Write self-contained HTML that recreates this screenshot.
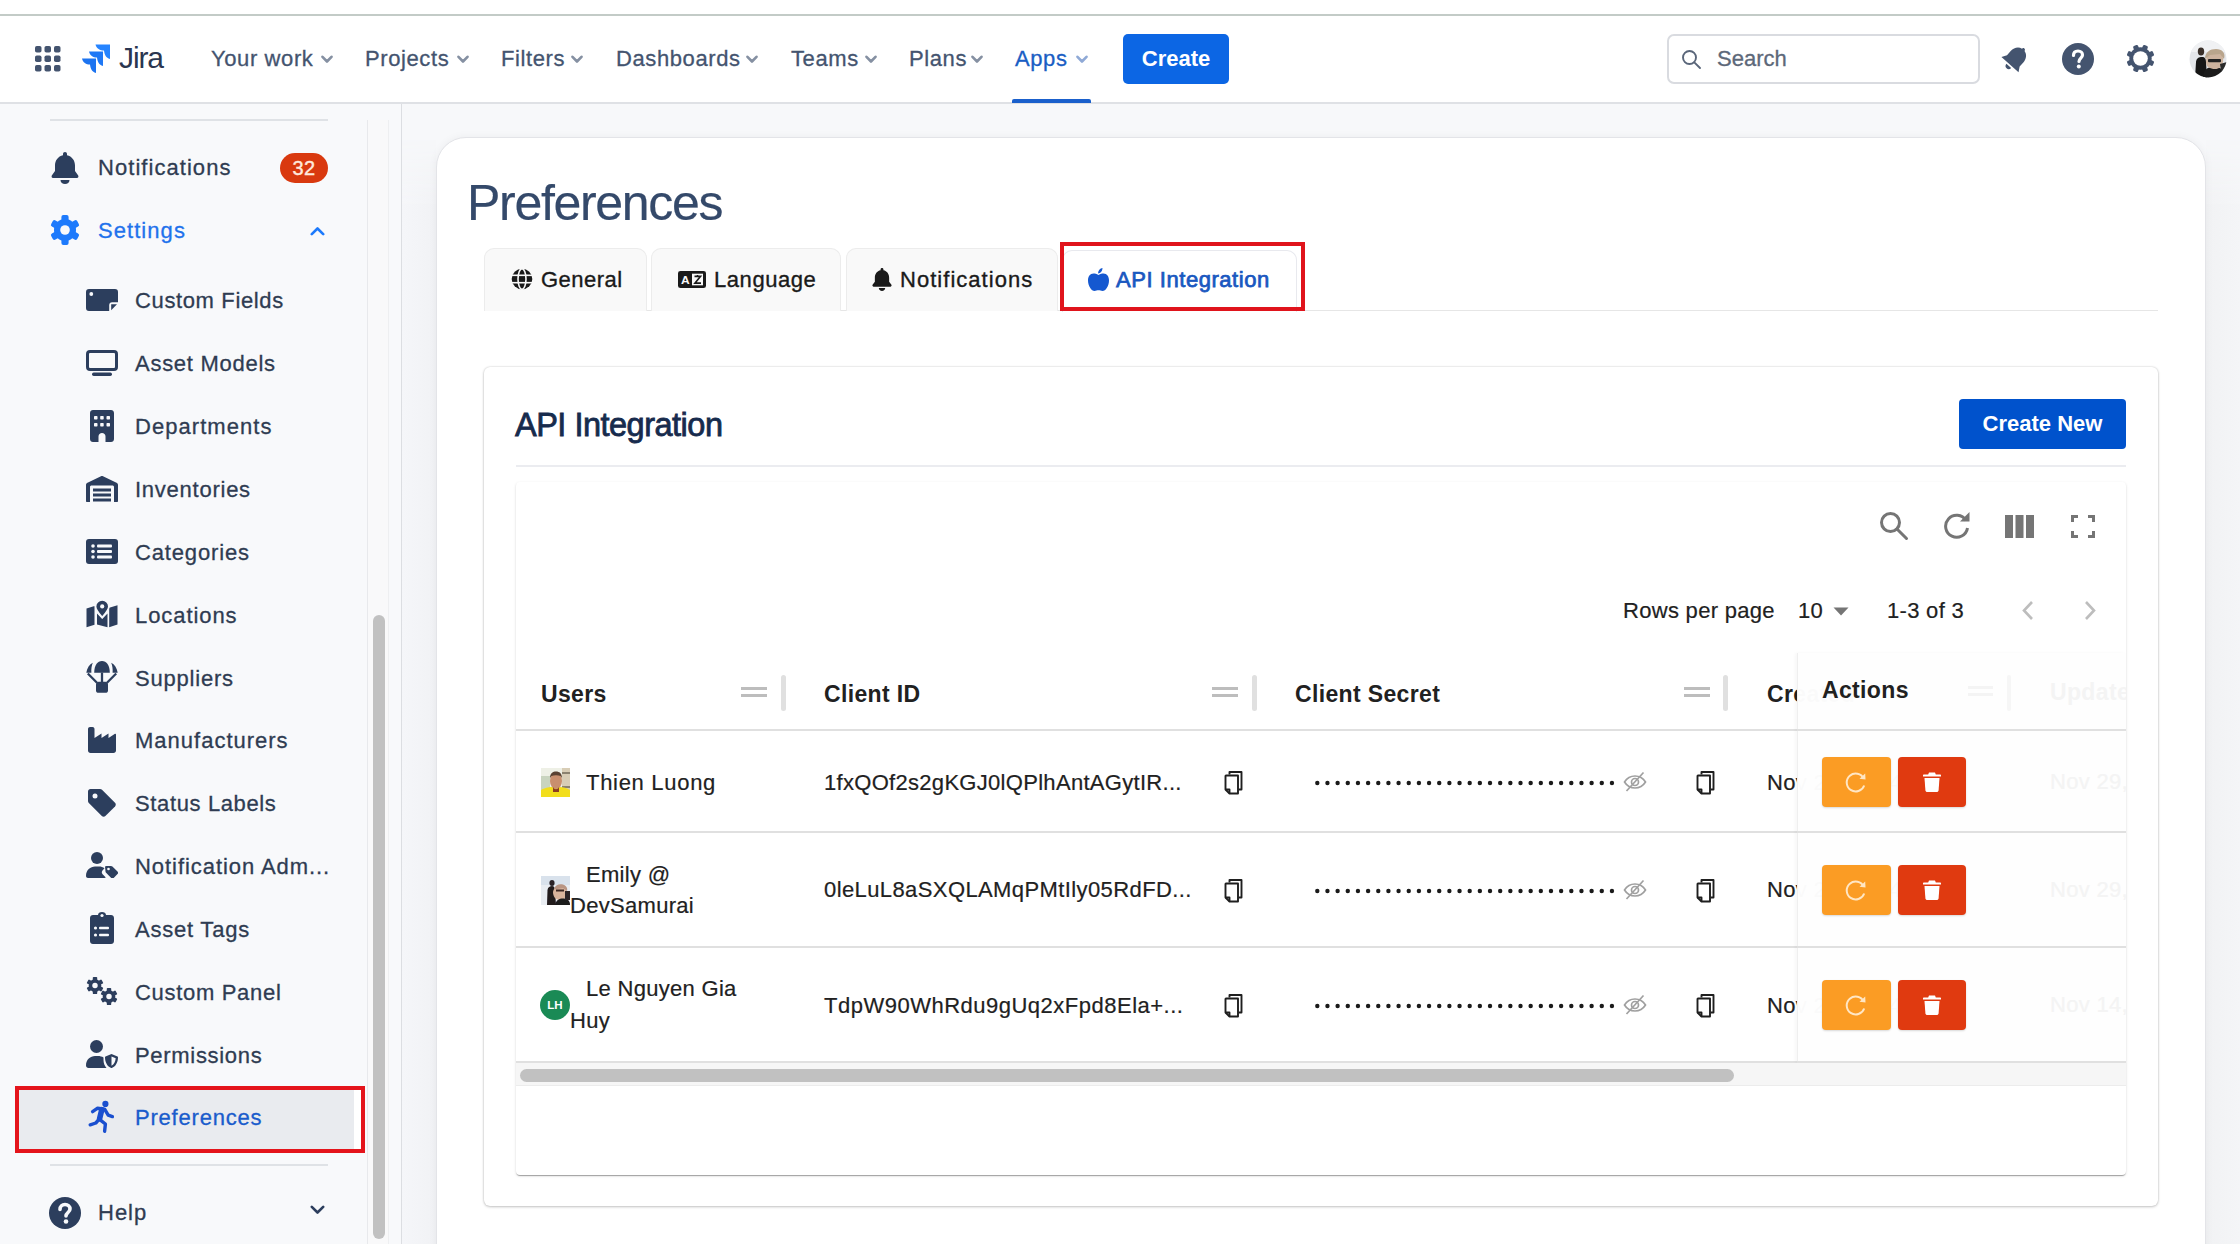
<!DOCTYPE html>
<html><head><meta charset="utf-8">
<style>
*{box-sizing:border-box;margin:0;padding:0}
html,body{width:2240px;height:1260px;overflow:hidden;background:#fff;font-family:"Liberation Sans",sans-serif}
.a{position:absolute}
.nw{white-space:nowrap}
#topline{left:0;top:14px;width:2240px;height:2px;background:#c3cbc7}
#nav{left:0;top:16px;width:2240px;height:88px;background:#fff;border-bottom:2px solid #dfe1e5}
.navt{font-size:22px;letter-spacing:0.6px;color:#44546f;top:45px;line-height:28px;-webkit-text-stroke:0.3px currentColor}
.chev{width:13px;height:9px}
#side{left:0;top:104px;width:401px;height:1140px;background:#f8f9fb}
.sbt{font-size:22px;letter-spacing:0.55px;color:#2f3c52;line-height:28px;-webkit-text-stroke:0.3px currentColor}
.sic{fill:#2c3e5d}
#main{left:401px;top:104px;width:1839px;height:1140px;background:#f7f8fa;border-left:1px solid #dcdee2}
#bigcard{left:436px;top:137px;width:1770px;height:1140px;background:#fff;border-radius:30px 30px 0 0;border:1px solid #e3e4e8;box-shadow:0 0 8px rgba(0,0,0,0.05)}
.tab{top:248px;height:63px;background:#f9f9f9;border:1px solid #ececec;border-bottom:none;border-radius:10px 10px 0 0}
.tabt{top:266px;-webkit-text-stroke:0.35px #1a1a1a;font-size:22px;color:#1a1a1a;line-height:28px;letter-spacing:0.2px}
.tt{font-size:22px;color:#212121;line-height:28px;letter-spacing:0.3px;-webkit-text-stroke:0.2px currentColor}
.th{top:680px;font-size:23px;font-weight:700;color:#212121;line-height:28px;letter-spacing:0.35px}
.td{font-size:22px;color:#212121;line-height:28px;letter-spacing:0.3px;-webkit-text-stroke:0.2px currentColor}
#bottom{left:0;top:1244px;width:2240px;height:16px;background:#fff}
</style></head><body>
<div id="topline" class="a"></div>

<div id="nav" class="a"></div>
<!-- grid icon -->
<svg class="a" style="left:35px;top:46px" width="26" height="26" viewBox="0 0 26 26" fill="#44546f">
<rect x="0" y="0" width="6.5" height="6.5" rx="1.8"/><rect x="9.5" y="0" width="6.5" height="6.5" rx="1.8"/><rect x="19" y="0" width="6.5" height="6.5" rx="1.8"/>
<rect x="0" y="9.5" width="6.5" height="6.5" rx="1.8"/><rect x="9.5" y="9.5" width="6.5" height="6.5" rx="1.8"/><rect x="19" y="9.5" width="6.5" height="6.5" rx="1.8"/>
<rect x="0" y="19" width="6.5" height="6.5" rx="1.8"/><rect x="9.5" y="19" width="6.5" height="6.5" rx="1.8"/><rect x="19" y="19" width="6.5" height="6.5" rx="1.8"/>
</svg>
<!-- jira logo -->
<svg class="a" style="left:82px;top:44px" width="29" height="30" viewBox="0 0 29 30">
<defs><linearGradient id="jg" x1="0" y1="0" x2="1" y2="1"><stop offset="0" stop-color="#2a7cf0"/><stop offset="1" stop-color="#1a6ee6"/></linearGradient></defs>
<path fill="#2684ff" d="M13.5,0.5 H28 V15 C24,14 22.5,10.5 22,6.5 C18,6.5 14.5,4.5 13.5,0.5Z"/>
<path fill="#1f78f5" d="M7,7.5 H21 V22 C17,21 15.5,17.5 15,13.5 C11,13.5 8,11.5 7,7.5Z"/>
<path fill="#1d74f0" d="M0,14.5 H14 V29 C10,28 8.5,24.5 8,20.5 C4,20.5 1,18.5 0,14.5Z"/>
</svg>
<div class="a nw" style="left:119px;top:41px;font-size:30px;color:#2a3650;letter-spacing:-1.1px;line-height:34px">Jira</div>
<div class="a nw navt" style="left:211px">Your work</div>
<div class="a nw navt" style="left:365px">Projects</div>
<div class="a nw navt" style="left:501px">Filters</div>
<div class="a nw navt" style="left:616px">Dashboards</div>
<div class="a nw navt" style="left:791px">Teams</div>
<div class="a nw navt" style="left:909px">Plans</div>
<div class="a nw navt" style="left:1015px;color:#1a5ec4">Apps</div>
<svg class="a" style="left:321px;top:55px" width="12" height="9" viewBox="0 0 12 9"><path d="M1.5,1.8 L6,6.5 L10.5,1.8" fill="none" stroke="#8590a2" stroke-width="2.6" stroke-linecap="round" stroke-linejoin="round"/></svg>
<svg class="a" style="left:457px;top:55px" width="12" height="9" viewBox="0 0 12 9"><path d="M1.5,1.8 L6,6.5 L10.5,1.8" fill="none" stroke="#8590a2" stroke-width="2.6" stroke-linecap="round" stroke-linejoin="round"/></svg>
<svg class="a" style="left:571px;top:55px" width="12" height="9" viewBox="0 0 12 9"><path d="M1.5,1.8 L6,6.5 L10.5,1.8" fill="none" stroke="#8590a2" stroke-width="2.6" stroke-linecap="round" stroke-linejoin="round"/></svg>
<svg class="a" style="left:746px;top:55px" width="12" height="9" viewBox="0 0 12 9"><path d="M1.5,1.8 L6,6.5 L10.5,1.8" fill="none" stroke="#8590a2" stroke-width="2.6" stroke-linecap="round" stroke-linejoin="round"/></svg>
<svg class="a" style="left:865px;top:55px" width="12" height="9" viewBox="0 0 12 9"><path d="M1.5,1.8 L6,6.5 L10.5,1.8" fill="none" stroke="#8590a2" stroke-width="2.6" stroke-linecap="round" stroke-linejoin="round"/></svg>
<svg class="a" style="left:971px;top:55px" width="12" height="9" viewBox="0 0 12 9"><path d="M1.5,1.8 L6,6.5 L10.5,1.8" fill="none" stroke="#8590a2" stroke-width="2.6" stroke-linecap="round" stroke-linejoin="round"/></svg>
<svg class="a" style="left:1076px;top:55px" width="12" height="9" viewBox="0 0 12 9"><path d="M1.5,1.8 L6,6.5 L10.5,1.8" fill="none" stroke="#8fa9d6" stroke-width="2.6" stroke-linecap="round" stroke-linejoin="round"/></svg>

<div class="a" style="left:1012px;top:99px;width:79px;height:4px;background:#1a60cc;border-radius:2px 2px 0 0"></div>
<div class="a nw" style="left:1123px;top:34px;width:106px;height:50px;background:#0c66e4;border-radius:5px;color:#fff;font-size:22px;font-weight:700;line-height:50px;text-align:center">Create</div>
<!-- search -->
<div class="a" style="left:1667px;top:34px;width:313px;height:50px;border:2.5px solid #d9dbe0;border-radius:7px;background:#fff"></div>
<svg class="a" style="left:1681px;top:49px" width="21" height="21" viewBox="0 0 21 21" fill="none" stroke="#5a667a" stroke-width="1.9"><circle cx="8.5" cy="8.5" r="6.5"/><line x1="13.3" y1="13.3" x2="19" y2="19" stroke-linecap="round"/></svg>
<div class="a nw" style="left:1717px;top:45px;font-size:22px;color:#5d6879;line-height:28px;-webkit-text-stroke:0.3px currentColor">Search</div>
<!-- bell tilted -->
<svg class="a" style="left:1998px;top:42px" width="34" height="34" viewBox="0 0 34 34" fill="#44546f">
<g transform="rotate(42 17 17)"><path d="M17,3 C18,3 18.7,3.7 18.7,4.6 C23,5.6 25.5,9.5 25.5,14 V19.5 L28.5,24.5 H5.5 L8.5,19.5 V14 C8.5,9.5 11,5.6 15.3,4.6 C15.3,3.7 16,3 17,3Z"/><path d="M13.8,26.3 H20.2 C20.2,28.3 18.8,29.6 17,29.6 C15.2,29.6 13.8,28.3 13.8,26.3Z"/></g>
</svg>
<!-- help -->
<svg class="a" style="left:2062px;top:43px" width="32" height="32" viewBox="0 0 32 32">
<circle cx="16" cy="16" r="16" fill="#44546f"/>
<path d="M11.5,12.5 C11.5,9.5 13.5,8 16,8 C18.8,8 20.5,9.8 20.5,12 C20.5,15 17,15.2 17,18.5" fill="none" stroke="#fff" stroke-width="3.2" stroke-linecap="round"/>
<circle cx="16.8" cy="23.5" r="2" fill="#fff"/>
</svg>
<!-- gear -->
<svg class="a" style="left:2126px;top:44px" width="29" height="29" viewBox="0 0 29 29"><g fill="#44546f" transform="translate(14.5 14.5)"><circle r="11.2"/><rect x="-2.6" y="-14" width="5.2" height="5" rx="1.3" transform="rotate(22.5)"/><rect x="-2.6" y="-14" width="5.2" height="5" rx="1.3" transform="rotate(67.5)"/><rect x="-2.6" y="-14" width="5.2" height="5" rx="1.3" transform="rotate(112.5)"/><rect x="-2.6" y="-14" width="5.2" height="5" rx="1.3" transform="rotate(157.5)"/><rect x="-2.6" y="-14" width="5.2" height="5" rx="1.3" transform="rotate(202.5)"/><rect x="-2.6" y="-14" width="5.2" height="5" rx="1.3" transform="rotate(247.5)"/><rect x="-2.6" y="-14" width="5.2" height="5" rx="1.3" transform="rotate(292.5)"/><rect x="-2.6" y="-14" width="5.2" height="5" rx="1.3" transform="rotate(337.5)"/></g><circle cx="14.5" cy="14.5" r="7.3" fill="#fff"/></svg>
<!-- avatar -->
<svg class="a" style="left:2189px;top:40px" width="38" height="38" viewBox="0 0 38 38">
<defs><clipPath id="avc"><circle cx="19" cy="19" r="18.5"/></clipPath></defs>
<g clip-path="url(#avc)">
<rect width="38" height="38" fill="#e4e6ea"/>
<rect x="0" y="0" width="38" height="12" fill="#f0f1f3"/>
<path d="M6,38 L7,22 C7.5,18 10,17 13,17 C16,17 17,19 17,22 L18,38Z" fill="#161616"/>
<ellipse cx="12" cy="11.5" rx="3.2" ry="4" fill="#3a302a"/>
<path d="M14,38 C14,30 18,27 25,27 C32,27 38,31 38,38Z" fill="#1b1b1b"/>
<path d="M17,22 C17,16 20,12 26,12 C32,12 35,16 34,22 C33,27 30,29 26,29 C21,29 17,27 17,22Z" fill="#cdb39e"/>
<path d="M16,19 C16,12 21,9 27,9 C33,9 37,13 35,19 L31,14 L21,15Z" fill="#b9a58c"/>
<rect x="19" y="19" width="13" height="3.2" rx="1" fill="#222"/>
<path d="M31,24 L38,22 V38 H33Z" fill="#2a2a2a"/>
</g>
</svg>

<div id="side" class="a"></div>
<div class="a" style="left:50px;top:119px;width:278px;height:2px;background:#dfe2e6"></div>
<div class="a" style="left:51px;top:152px"><svg width="28" height="32" viewBox="0 0 28 32" fill="#2c3e5d"><path d="M14,0 C15.2,0 16,0.8 16,2 V3.2 C21,4.2 24,8.5 24,13.5 V19 L27.2,23.5 C27.8,24.5 27.2,26 26,26 H2 C0.8,26 0.2,24.5 0.8,23.5 L4,19 V13.5 C4,8.5 7,4.2 12,3.2 V2 C12,0.8 12.8,0 14,0Z"/><path d="M9.5,28 H18.5 C18.5,30.5 16.5,32 14,32 C11.5,32 9.5,30.5 9.5,28Z"/></svg></div>
<div class="a nw sbt" style="left:98px;top:154px;letter-spacing:1.05px">Notifications</div>
<div class="a nw" style="left:280px;top:153px;width:48px;height:30px;border-radius:15px;background:#d9390f;color:#ffe9dc;font-size:20px;line-height:30px;text-align:center;-webkit-text-stroke:0.4px #ffe9dc;letter-spacing:0.5px">32</div>
<div class="a" style="left:50px;top:215px"><svg width="30" height="30" viewBox="0 0 30 30"><g fill="#1d7afc" transform="translate(15 15)"><circle r="11"/><rect x="-3.6" y="-15" width="7.2" height="7" rx="2" transform="rotate(0)"/><rect x="-3.6" y="-15" width="7.2" height="7" rx="2" transform="rotate(60)"/><rect x="-3.6" y="-15" width="7.2" height="7" rx="2" transform="rotate(120)"/><rect x="-3.6" y="-15" width="7.2" height="7" rx="2" transform="rotate(180)"/><rect x="-3.6" y="-15" width="7.2" height="7" rx="2" transform="rotate(240)"/><rect x="-3.6" y="-15" width="7.2" height="7" rx="2" transform="rotate(300)"/></g><circle cx="15" cy="15" r="4.8" fill="#f8f9fb"/></svg></div>
<div class="a nw sbt" style="left:98px;top:217px;color:#1f72ec;letter-spacing:1.06px">Settings</div>
<svg class="a" style="left:310px;top:226px" width="15" height="10" viewBox="0 0 15 10"><path d="M1.8,8.2 L7.5,2.5 L13.2,8.2" fill="none" stroke="#1d7afc" stroke-width="2.6" stroke-linecap="round" stroke-linejoin="round"/></svg>
<div class="a" style="left:86px;top:289px"><svg width="32" height="22" viewBox="0 0 32 22"><path fill="#2c3e5d" d="M3,0 H29 Q32,0 32,3 V13.2 H26.2 Q23.2,13.2 23.2,16.2 V22 H3 Q0,22 0,19 V3 Q0,0 3,0Z"/><circle cx="5.3" cy="5" r="1.9" fill="#f8f9fb"/><path fill="#2c3e5d" d="M25.2,15.3 H31 L25.2,21.3Z"/></svg></div>
<div class="a nw sbt" style="left:135px;top:287px;letter-spacing:0.63px">Custom Fields</div>
<div class="a" style="left:86px;top:350px"><svg width="32" height="26" viewBox="0 0 32 26" fill="none"><rect x="1.5" y="1.5" width="29" height="18" rx="2.5" stroke="#2c3e5d" stroke-width="3"/><rect x="6" y="22.5" width="20" height="3.5" rx="1.7" fill="#2c3e5d"/></svg></div>
<div class="a nw sbt" style="left:135px;top:350px;letter-spacing:0.73px">Asset Models</div>
<div class="a" style="left:90px;top:410px"><svg width="24" height="32" viewBox="0 0 24 32"><path fill="#2c3e5d" d="M3,0 H21 C22.7,0 24,1.3 24,3 V29 C24,30.7 22.7,32 21,32 H15.5 V26.5 C15.5,24.5 14,23 12,23 C10,23 8.5,24.5 8.5,26.5 V32 H3 C1.3,32 0,30.7 0,29 V3 C0,1.3 1.3,0 3,0Z"/><g fill="#f8f9fb"><rect x="4" y="6" width="3.5" height="3.5" rx=".7"/><rect x="10.2" y="6" width="3.5" height="3.5" rx=".7"/><rect x="16.5" y="6" width="3.5" height="3.5" rx=".7"/><rect x="4" y="13" width="3.5" height="3.5" rx=".7"/><rect x="10.2" y="13" width="3.5" height="3.5" rx=".7"/><rect x="16.5" y="13" width="3.5" height="3.5" rx=".7"/></g></svg></div>
<div class="a nw sbt" style="left:135px;top:413px;letter-spacing:1.05px">Departments</div>
<div class="a" style="left:86px;top:476px"><svg width="32" height="26" viewBox="0 0 32 26"><path fill="#2c3e5d" d="M0,9 C0,8 0.6,7.2 1.5,6.8 L15,0.3 C15.6,0 16.4,0 17,0.3 L30.5,6.8 C31.4,7.2 32,8 32,9 V25 C32,25.6 31.6,26 31,26 H28 V11 C28,10 27.2,9.5 26.5,9.5 H5.5 C4.8,9.5 4,10 4,11 V26 H1 C0.4,26 0,25.6 0,25Z"/><rect x="7" y="12.5" width="18" height="3" fill="#2c3e5d"/><rect x="7" y="17.5" width="18" height="3" fill="#2c3e5d"/><rect x="7" y="22.5" width="18" height="3" fill="#2c3e5d"/></svg></div>
<div class="a nw sbt" style="left:135px;top:476px;letter-spacing:0.75px">Inventories</div>
<div class="a" style="left:86px;top:539px"><svg width="32" height="25" viewBox="0 0 32 25"><rect width="32" height="25" rx="3" fill="#2c3e5d"/><g fill="#f8f9fb"><circle cx="7" cy="7" r="1.8"/><circle cx="7" cy="12.5" r="1.8"/><circle cx="7" cy="18" r="1.8"/><rect x="11" y="5.5" width="15" height="3" rx="1"/><rect x="11" y="11" width="15" height="3" rx="1"/><rect x="11" y="16.5" width="15" height="3" rx="1"/></g></svg></div>
<div class="a nw sbt" style="left:135px;top:539px;letter-spacing:0.85px">Categories</div>
<div class="a" style="left:86px;top:600px"><svg width="32" height="28" viewBox="0 0 32 28"><g fill="#2c3e5d"><path d="M0.5,8.5 L8.5,6 V24.8 L0.5,27.2Z"/><path d="M11,13.5 L16.2,19 L21.5,13.5 V27.2 L11,24.6Z"/><path d="M23.2,7.8 L31.5,5.3 V24.4 L23.2,27.2Z"/></g><path d="M16.2,0 C19.9,0 22.8,2.9 22.8,6.6 C22.8,10.2 18.5,14.8 16.2,17.4 C13.9,14.8 9.6,10.2 9.6,6.6 C9.6,2.9 12.5,0 16.2,0Z" fill="#2c3e5d" stroke="#f8f9fb" stroke-width="1.6"/><circle cx="16.2" cy="6.4" r="2.1" fill="#f8f9fb"/></svg></div>
<div class="a nw sbt" style="left:135px;top:602px;letter-spacing:0.93px">Locations</div>
<div class="a" style="left:86px;top:661px"><svg width="32" height="32" viewBox="0 0 32 32"><g fill="#2c3e5d"><path d="M8.2,11.8 C8.2,4.2 11.5,0 16,0 C20.5,0 23.8,4.2 23.8,11.8Z"/><path d="M0.3,11.8 C1,7 3.5,3.5 6.8,1.8 C5.6,4.8 5.1,8.2 5.4,11.8Z"/><path d="M31.7,11.8 C31,7 28.5,3.5 25.2,1.8 C26.4,4.8 26.9,8.2 26.6,11.8Z"/><rect x="10" y="20.8" width="12" height="11" rx="2.6"/></g><g stroke="#2c3e5d" stroke-width="2.3" fill="none"><path d="M1.8,12.5 L11,21.8 M30.2,12.5 L21,21.8 M16,11.5 V21.5"/></g></svg></div>
<div class="a nw sbt" style="left:135px;top:665px;letter-spacing:0.80px">Suppliers</div>
<div class="a" style="left:88px;top:727px"><svg width="28" height="26" viewBox="0 0 28 26"><path fill="#2c3e5d" d="M2,0 H4.5 C5.6,0 6.5,0.9 6.5,2 V11 L13.5,6.5 V11 L20.5,6.5 V11 L27,6.8 C27.5,6.5 28,6.9 28,7.4 V23.5 C28,24.9 26.9,26 25.5,26 H2.5 C1.1,26 0,24.9 0,23.5 V2 C0,0.9 0.9,0 2,0Z"/></svg></div>
<div class="a nw sbt" style="left:135px;top:727px;letter-spacing:1.00px">Manufacturers</div>
<div class="a" style="left:88px;top:789px"><svg width="28" height="28" viewBox="0 0 28 28"><path fill="#2c3e5d" d="M0,2.5 C0,1.1 1.1,0 2.5,0 H12 C12.8,0 13.5,0.3 14,0.8 L27,13.8 C28,14.8 28,16.4 27,17.4 L17.4,27 C16.4,28 14.8,28 13.8,27 L0.8,14 C0.3,13.5 0,12.8 0,12Z"/><circle cx="7" cy="7" r="2.5" fill="#f8f9fb"/></svg></div>
<div class="a nw sbt" style="left:135px;top:790px;letter-spacing:0.63px">Status Labels</div>
<div class="a" style="left:86px;top:852px"><svg width="32" height="26" viewBox="0 0 32 26"><circle cx="11" cy="6" r="6" fill="#2c3e5d"/><path fill="#2c3e5d" d="M0,24 C0,18 4.5,14.5 9,14.5 H13 C15,14.5 17,15.2 18.5,16.2 L16.5,18.5 C15.5,19.6 15.6,21.2 16.6,22.2 L19.8,25.5 C19.5,25.8 19,26 18.5,26 H2 C0.9,26 0,25.1 0,24Z"/><path fill="#2c3e5d" d="M19,14.5 C19.4,14.1 19.9,13.9 20.5,13.9 H25 C25.5,13.9 26,14.1 26.4,14.5 L31.5,19.6 C32.2,20.3 32.2,21.4 31.5,22.1 L27.7,25.9 C27,26.6 25.9,26.6 25.2,25.9 L20.1,20.8 C19.7,20.4 19.5,19.9 19.5,19.4 Z"/><circle cx="22.5" cy="17" r="1.3" fill="#f8f9fb"/></svg></div>
<div class="a nw sbt" style="left:135px;top:853px;letter-spacing:0.94px">Notification Adm...</div>
<div class="a" style="left:90px;top:912px"><svg width="24" height="32" viewBox="0 0 24 32"><path fill="#2c3e5d" d="M8,3 C8,1.3 9.8,0 12,0 C14.2,0 16,1.3 16,3 H21 C22.7,3 24,4.3 24,6 V29 C24,30.7 22.7,32 21,32 H3 C1.3,32 0,30.7 0,29 V6 C0,4.3 1.3,3 3,3Z"/><g fill="#f8f9fb"><circle cx="12" cy="3.5" r="1.6"/><circle cx="5.5" cy="16" r="1.6"/><circle cx="5.5" cy="23" r="1.6"/><rect x="9" y="14.7" width="10" height="2.6" rx="1"/><rect x="9" y="21.7" width="10" height="2.6" rx="1"/></g></svg></div>
<div class="a nw sbt" style="left:135px;top:916px;letter-spacing:0.77px">Asset Tags</div>
<div class="a" style="left:86px;top:977px"><svg width="32" height="28" viewBox="0 0 32 28"><g fill="#2c3e5d" transform="translate(9 8.5)"><circle r="6.29"/><rect x="-2.21" y="-8.5" width="4.42" height="4.25" rx="0.85" transform="rotate(0)"/><rect x="-2.21" y="-8.5" width="4.42" height="4.25" rx="0.85" transform="rotate(60)"/><rect x="-2.21" y="-8.5" width="4.42" height="4.25" rx="0.85" transform="rotate(120)"/><rect x="-2.21" y="-8.5" width="4.42" height="4.25" rx="0.85" transform="rotate(180)"/><rect x="-2.21" y="-8.5" width="4.42" height="4.25" rx="0.85" transform="rotate(240)"/><rect x="-2.21" y="-8.5" width="4.42" height="4.25" rx="0.85" transform="rotate(300)"/></g><circle cx="9" cy="8.5" r="2.72" fill="#f8f9fb"/><g fill="#2c3e5d" transform="translate(23 19.5)"><circle r="6.29"/><rect x="-2.21" y="-8.5" width="4.42" height="4.25" rx="0.85" transform="rotate(0)"/><rect x="-2.21" y="-8.5" width="4.42" height="4.25" rx="0.85" transform="rotate(60)"/><rect x="-2.21" y="-8.5" width="4.42" height="4.25" rx="0.85" transform="rotate(120)"/><rect x="-2.21" y="-8.5" width="4.42" height="4.25" rx="0.85" transform="rotate(180)"/><rect x="-2.21" y="-8.5" width="4.42" height="4.25" rx="0.85" transform="rotate(240)"/><rect x="-2.21" y="-8.5" width="4.42" height="4.25" rx="0.85" transform="rotate(300)"/></g><circle cx="23" cy="19.5" r="2.72" fill="#f8f9fb"/></svg></div>
<div class="a nw sbt" style="left:135px;top:979px;letter-spacing:0.69px">Custom Panel</div>
<div class="a" style="left:86px;top:1040px"><svg width="32" height="28" viewBox="0 0 32 28"><circle cx="10.5" cy="6.5" r="6.5" fill="#2c3e5d"/><path fill="#2c3e5d" d="M0,25.5 C0,19.5 4.5,16 9,16 H12 C14,16 16,16.5 17.5,17.5 V20 C17.5,23 18.7,26 20.5,28 H2.5 C1.1,28 0,26.9 0,25.5Z"/><path fill="#2c3e5d" d="M25.5,14 L31.5,16.5 C31.8,16.6 32,17 32,17.3 C32,22.5 29.5,26.8 25.8,28 C25.6,28.1 25.4,28.1 25.2,28 C21.5,26.8 19,22.5 19,17.3 C19,17 19.2,16.6 19.5,16.5Z"/><path fill="#f8f9fb" d="M25.5,16.5 V25.7 C28,24.5 29.5,21.5 29.7,18.3Z"/></svg></div>
<div class="a nw sbt" style="left:135px;top:1042px;letter-spacing:0.69px">Permissions</div>
<div class="a" style="left:15px;top:1086px;width:350px;height:67px;border:4px solid #e4141b;background:#fff"></div>
<div class="a" style="left:19px;top:1090px;width:335px;height:59px;background:#e9ebef"></div>
<svg class="a" style="left:80px;top:1095px" width="40" height="42" viewBox="0 0 40 42"><g fill="none" stroke="#1a4fcf" stroke-linecap="round" stroke-linejoin="round"><circle cx="25.4" cy="8.9" r="1.6" stroke-width="3" fill="#1a4fcf"/><path d="M12.6,16.6 L17.6,13.2 L24.6,14.2 L28.2,20.2 L32.4,21.6" stroke-width="3.4"/><path d="M21.8,14.6 L19.6,23.6" stroke-width="5.6"/><path d="M19.2,24.2 L15.8,28 L10.2,29.8" stroke-width="3.4"/><path d="M19.8,24.6 L25.4,29 L24.6,36.2" stroke-width="3.4"/></g></svg>
<div class="a nw sbt" style="left:135px;top:1104px;letter-spacing:0.79px;color:#1a5ccc">Preferences</div>
<div class="a" style="left:50px;top:1164px;width:278px;height:2px;background:#dfe2e6"></div>
<div class="a" style="left:49px;top:1197px"><svg width="32" height="32" viewBox="0 0 32 32"><circle cx="16" cy="16" r="16" fill="#2c3e5d"/><path d="M11,12.5 C11,9.2 13.3,7.5 16,7.5 C19,7.5 21,9.5 21,12 C21,15.5 17,15.5 17,19" fill="none" stroke="#f8f9fb" stroke-width="3.6" stroke-linecap="round"/><circle cx="17" cy="24.5" r="2.3" fill="#f8f9fb"/></svg></div>
<div class="a nw sbt" style="left:98px;top:1199px;letter-spacing:1px">Help</div>
<svg class="a" style="left:310px;top:1205px" width="15" height="10" viewBox="0 0 15 10"><path d="M1.8,1.8 L7.5,7.5 L13.2,1.8" fill="none" stroke="#2c3e5d" stroke-width="2.6" stroke-linecap="round" stroke-linejoin="round"/></svg>
<div class="a" style="left:367px;top:120px;width:22px;height:1124px;background:#f9f9fa;border-left:1px solid #e8e9ec;border-right:1px solid #eeeff1"></div>
<div class="a" style="left:373px;top:615px;width:12px;height:624px;border-radius:6px;background:#c1c1c1"></div>

<div id="main" class="a"></div>
<div class="a" style="left:402px;top:137px;width:34px;height:1107px;background:linear-gradient(90deg,#f5f6f9,#f1f2f5);-webkit-mask-image:linear-gradient(180deg,transparent,#000 70px)"></div>
<div class="a" style="left:2206px;top:137px;width:34px;height:1107px;background:linear-gradient(90deg,#f1f2f4,#f4f5f7);-webkit-mask-image:linear-gradient(180deg,transparent,#000 70px)"></div>
<div id="bigcard" class="a"></div>
<div class="a nw" style="left:467px;top:173px;font-size:50px;letter-spacing:-1.3px;color:#34496a;line-height:60px;-webkit-text-stroke:0.2px currentColor">Preferences</div>
<!-- tabs -->
<div class="a" style="left:484px;top:310px;width:1674px;height:1px;background:#e6e6e6"></div>
<div class="a tab" style="left:484px;width:163px"></div>
<div class="a tab" style="left:651px;width:190px"></div>
<div class="a tab" style="left:846px;width:212px"></div>
<div class="a" style="left:1060px;top:242px;width:245px;height:69px;background:#fff"></div><div class="a" style="left:1062px;top:250px;width:235px;height:62px;border:1px solid #e8e9ee;border-bottom:none;border-radius:10px 10px 0 0;background:#fff"></div><div class="a" style="left:1060px;top:242px;width:245px;height:69px;border:4px solid #e0141c"></div>
<svg class="a" style="left:511px;top:268px" width="22" height="22" viewBox="0 0 22 22"><circle cx="11" cy="11" r="10.3" fill="#1a1a1a"/><g stroke="#f9f9f9" stroke-width="1.6" fill="none"><ellipse cx="11" cy="11" rx="4" ry="10.3"/><line x1="0.5" y1="7.3" x2="21.5" y2="7.3"/><line x1="0.5" y1="14.7" x2="21.5" y2="14.7"/></g></svg>
<div class="a nw tabt" style="left:541px;letter-spacing:0.47px">General</div>
<svg class="a" style="left:678px;top:271px" width="28" height="17" viewBox="0 0 28 19" preserveAspectRatio="none"><rect width="28" height="19" rx="2.5" fill="#1a1a1a"/><rect x="14" y="3" width="11" height="13" fill="#f9f9f9"/><text x="3" y="14.5" font-family="Liberation Sans" font-weight="700" font-size="12" fill="#f9f9f9">A</text><path d="M16.5,6 H22.5 L17,13.5 H23" stroke="#1a1a1a" stroke-width="1.8" fill="none"/><line x1="19.5" y1="4.5" x2="19.5" y2="6" stroke="#1a1a1a" stroke-width="1.5"/></svg>
<div class="a nw tabt" style="left:714px;letter-spacing:0.56px">Language</div>
<svg class="a" style="left:872px;top:268px" width="20" height="23" viewBox="0 0 28 32" fill="#1a1a1a"><path d="M14,0 C15.2,0 16,0.8 16,2 V3.2 C21,4.2 24,8.5 24,13.5 V19 L27.2,23.5 C27.8,24.5 27.2,26 26,26 H2 C0.8,26 0.2,24.5 0.8,23.5 L4,19 V13.5 C4,8.5 7,4.2 12,3.2 V2 C12,0.8 12.8,0 14,0Z"/><path d="M9.5,28 H18.5 C18.5,30.5 16.5,32 14,32 C11.5,32 9.5,30.5 9.5,28Z"/></svg>
<div class="a nw tabt" style="left:900px;letter-spacing:1.03px">Notifications</div>
<svg class="a" style="left:1088px;top:268px" width="21" height="23" viewBox="0 0 21 23" fill="#1558d0"><path d="M10.5,7 C12.5,5.8 14,5.5 15.5,5.5 C19,5.5 21,8.5 21,12.5 C21,18 17.5,23 14.5,23 C13,23 12,22.3 10.5,22.3 C9,22.3 8,23 6.5,23 C3.5,23 0,18 0,12.5 C0,8.5 2,5.5 5.5,5.5 C7,5.5 8.5,5.8 10.5,7Z"/><path d="M10,5.5 C10,2.5 12,0.3 14.5,0 C14.5,3 12.5,5.3 10,5.5Z"/></svg>
<div class="a nw tabt" style="left:1116px;color:#1a58c0;font-weight:400;letter-spacing:0.55px;-webkit-text-stroke:0.75px #1a58c0">API Integration</div>
<!-- inner card -->
<div class="a" style="left:484px;top:367px;width:1674px;height:839px;background:#fff;border-radius:6px;box-shadow:0 1px 3px rgba(0,0,0,0.2),0 0 2px rgba(0,0,0,0.18)"></div>
<div class="a nw" style="left:515px;top:406px;font-size:32.5px;letter-spacing:-0.5px;color:#172b4d;line-height:38px;-webkit-text-stroke:0.8px currentColor">API Integration</div>
<div class="a nw" style="left:1959px;top:399px;width:167px;height:50px;background:#0052cc;border-radius:4px;color:#fff;font-size:22px;font-weight:700;line-height:50px;text-align:center">Create New</div>
<div class="a" style="left:516px;top:465px;width:1610px;height:2px;background:#ebecf0"></div>
<!-- table paper -->
<div class="a" style="left:516px;top:482px;width:1610px;height:693px;background:#fff;border-radius:4px;box-shadow:0 2px 1px -1px rgba(0,0,0,0.2),0 1px 1px 0 rgba(0,0,0,0.14),0 1px 3px 0 rgba(0,0,0,0.12)"></div>


<!-- toolbar icons -->
<svg class="a" style="left:1879px;top:511px" width="30" height="30" viewBox="0 0 30 30" fill="none" stroke="#757575" stroke-width="3"><circle cx="11.5" cy="11.5" r="9"/><line x1="18" y1="18" x2="27.5" y2="27.5" stroke-linecap="round"/></svg>
<svg class="a" style="left:1943px;top:512px" width="29" height="28" viewBox="0 0 29 28"><path d="M23,8.5 A11,11 0 1 0 24.5,16" fill="none" stroke="#757575" stroke-width="3"/><path d="M17,9.5 L26.5,9.5 L26.5,0 Z" fill="#757575"/></svg>
<svg class="a" style="left:2005px;top:515px" width="29" height="23" viewBox="0 0 29 23" fill="#757575"><rect x="0" y="0" width="8" height="23"/><rect x="10.5" y="0" width="8" height="23"/><rect x="21" y="0" width="8" height="23"/></svg>
<svg class="a" style="left:2071px;top:515px" width="24" height="23" viewBox="0 0 24 23" fill="none" stroke="#757575" stroke-width="3"><path d="M1.5,7 V1.5 H7 M17,1.5 H22.5 V7 M22.5,16 V21.5 H17 M7,21.5 H1.5 V16"/></svg>
<div class="a nw tt" style="left:1623px;top:597px">Rows per page</div>
<div class="a nw tt" style="left:1798px;top:597px">10</div>
<svg class="a" style="left:1833px;top:607px" width="16" height="9" viewBox="0 0 16 9"><path d="M0.5,0.5 H15.5 L8,8.5Z" fill="#757575"/></svg>
<div class="a nw tt" style="left:1887px;top:597px">1-3 of 3</div>
<svg class="a" style="left:2020px;top:600px" width="15" height="21" viewBox="0 0 15 21"><path d="M12,2 L4,10.5 L12,19" fill="none" stroke="#bdbdbd" stroke-width="2.6"/></svg>
<svg class="a" style="left:2083px;top:600px" width="15" height="21" viewBox="0 0 15 21"><path d="M3,2 L11,10.5 L3,19" fill="none" stroke="#bdbdbd" stroke-width="2.6"/></svg>
<!-- header -->
<div class="a nw th" style="left:541px">Users</div>
<div class="a nw th" style="left:824px">Client ID</div>
<div class="a nw th" style="left:1295px">Client Secret</div>
<div class="a nw th" style="left:1767px">Created</div>
<div class="a" style="left:741px;top:687px;width:26px;height:3px;background:#bdbdbd"></div>
<div class="a" style="left:741px;top:694px;width:26px;height:3px;background:#bdbdbd"></div>
<div class="a" style="left:781px;top:675px;width:5px;height:36px;background:#e0e0e0;border-radius:2.5px"></div>
<div class="a" style="left:1212px;top:687px;width:26px;height:3px;background:#bdbdbd"></div>
<div class="a" style="left:1212px;top:694px;width:26px;height:3px;background:#bdbdbd"></div>
<div class="a" style="left:1252px;top:675px;width:5px;height:36px;background:#e0e0e0;border-radius:2.5px"></div>
<div class="a" style="left:1684px;top:687px;width:26px;height:3px;background:#bdbdbd"></div>
<div class="a" style="left:1684px;top:694px;width:26px;height:3px;background:#bdbdbd"></div>
<div class="a" style="left:1723px;top:675px;width:5px;height:36px;background:#e0e0e0;border-radius:2.5px"></div>

<div class="a" style="left:516px;top:729px;width:1610px;height:2px;background:#e0e0e0"></div>
<div class="a" style="left:516px;top:831px;width:1610px;height:2px;background:#e0e0e0"></div>
<div class="a" style="left:516px;top:946px;width:1610px;height:2px;background:#e0e0e0"></div>
<div class="a" style="left:516px;top:1061px;width:1610px;height:2px;background:#e0e0e0"></div>
<div class="a nw td" style="left:824px;top:769px">1fxQOf2s2gKGJ0lQPlhAntAGytIR...</div>
<div class="a" style="left:1224px;top:771px"><svg width="20" height="24" viewBox="0 0 20 24" fill="none" stroke="#1f1f1f" stroke-width="1.9" stroke-linejoin="round"><path d="M5.5,3.5 V1 H17.5 V18.5 H14.5"/><path d="M2,4.5 H14 V22.5 H5.5 L1.5,18.5 V5 Z"/><path d="M1.5,18.5 H5.5 V22.5" /></svg></div>
<div class="a" style="left:1696px;top:771px"><svg width="20" height="24" viewBox="0 0 20 24" fill="none" stroke="#1f1f1f" stroke-width="1.9" stroke-linejoin="round"><path d="M5.5,3.5 V1 H17.5 V18.5 H14.5"/><path d="M2,4.5 H14 V22.5 H5.5 L1.5,18.5 V5 Z"/><path d="M1.5,18.5 H5.5 V22.5" /></svg></div>
<div class="a" style="left:1623px;top:771px"><svg width="24" height="22" viewBox="0 0 24 22" fill="none" stroke="#a0a0a0" stroke-width="1.7"><path d="M1.5,11 C4,7 7.5,5 12,5 C16.5,5 20,7 22.5,11 C20,15 16.5,17 12,17 C7.5,17 4,15 1.5,11Z"/><circle cx="12" cy="11" r="3.5"/><line x1="3.5" y1="20" x2="20.5" y2="1.5"/></svg></div>
<div class="a nw td" style="left:1767px;top:769px">Nov 29, 2024</div>
<div class="a nw td" style="left:824px;top:876px;letter-spacing:0.4px">0leLuL8aSXQLAMqPMtIly05RdFD...</div>
<div class="a" style="left:1224px;top:879px"><svg width="20" height="24" viewBox="0 0 20 24" fill="none" stroke="#1f1f1f" stroke-width="1.9" stroke-linejoin="round"><path d="M5.5,3.5 V1 H17.5 V18.5 H14.5"/><path d="M2,4.5 H14 V22.5 H5.5 L1.5,18.5 V5 Z"/><path d="M1.5,18.5 H5.5 V22.5" /></svg></div>
<div class="a" style="left:1696px;top:879px"><svg width="20" height="24" viewBox="0 0 20 24" fill="none" stroke="#1f1f1f" stroke-width="1.9" stroke-linejoin="round"><path d="M5.5,3.5 V1 H17.5 V18.5 H14.5"/><path d="M2,4.5 H14 V22.5 H5.5 L1.5,18.5 V5 Z"/><path d="M1.5,18.5 H5.5 V22.5" /></svg></div>
<div class="a" style="left:1623px;top:879px"><svg width="24" height="22" viewBox="0 0 24 22" fill="none" stroke="#a0a0a0" stroke-width="1.7"><path d="M1.5,11 C4,7 7.5,5 12,5 C16.5,5 20,7 22.5,11 C20,15 16.5,17 12,17 C7.5,17 4,15 1.5,11Z"/><circle cx="12" cy="11" r="3.5"/><line x1="3.5" y1="20" x2="20.5" y2="1.5"/></svg></div>
<div class="a nw td" style="left:1767px;top:876px">Nov 29, 2024</div>
<div class="a nw td" style="left:824px;top:992px;letter-spacing:0.5px">TdpW90WhRdu9gUq2xFpd8Ela+...</div>
<div class="a" style="left:1224px;top:994px"><svg width="20" height="24" viewBox="0 0 20 24" fill="none" stroke="#1f1f1f" stroke-width="1.9" stroke-linejoin="round"><path d="M5.5,3.5 V1 H17.5 V18.5 H14.5"/><path d="M2,4.5 H14 V22.5 H5.5 L1.5,18.5 V5 Z"/><path d="M1.5,18.5 H5.5 V22.5" /></svg></div>
<div class="a" style="left:1696px;top:994px"><svg width="20" height="24" viewBox="0 0 20 24" fill="none" stroke="#1f1f1f" stroke-width="1.9" stroke-linejoin="round"><path d="M5.5,3.5 V1 H17.5 V18.5 H14.5"/><path d="M2,4.5 H14 V22.5 H5.5 L1.5,18.5 V5 Z"/><path d="M1.5,18.5 H5.5 V22.5" /></svg></div>
<div class="a" style="left:1623px;top:994px"><svg width="24" height="22" viewBox="0 0 24 22" fill="none" stroke="#a0a0a0" stroke-width="1.7"><path d="M1.5,11 C4,7 7.5,5 12,5 C16.5,5 20,7 22.5,11 C20,15 16.5,17 12,17 C7.5,17 4,15 1.5,11Z"/><circle cx="12" cy="11" r="3.5"/><line x1="3.5" y1="20" x2="20.5" y2="1.5"/></svg></div>
<div class="a nw td" style="left:1767px;top:992px">Nov 29, 2024</div>
<div class="a" style="left:541px;top:768px"><svg width="29" height="29" viewBox="0 0 29 29"><defs><filter id="b1" x="-10%" y="-10%" width="120%" height="120%"><feGaussianBlur stdDeviation="0.7"/></filter><clipPath id="c1"><rect width="29" height="29"/></clipPath></defs><g clip-path="url(#c1)"><rect width="29" height="29" fill="#eef0e6"/><g filter="url(#b1)">
<rect x="0" y="8" width="9" height="14" fill="#c9d4bf"/><rect x="21" y="0" width="8" height="26" fill="#d8cdb6"/><rect x="21" y="4" width="8" height="2" fill="#8b8270"/><rect x="21" y="18" width="8" height="2" fill="#8b8270"/>
<path d="M0,22 C3,20 8,19 10,19 L19,19 C22,19 26,20 29,22 V29 H0Z" fill="#f2de1e"/>
<ellipse cx="15" cy="13" rx="6" ry="8" fill="#c98f6e"/>
<path d="M9,10 C9,5 12,3.5 15,3.5 C18.5,3.5 21,5.5 21,10 L19.5,8 C17,7 13,7 10.5,8Z" fill="#5a4332"/>
<path d="M12,19 C13,22 17,22 18,19 L18,24 L12,24Z" fill="#8a3e22"/>
</g></g></svg></div>
<div class="a nw td" style="left:586px;top:769px;letter-spacing:0.7px">Thien Luong</div>
<div class="a" style="left:541px;top:876px"><svg width="29" height="29" viewBox="0 0 29 29"><defs><filter id="b2" x="-10%" y="-10%" width="120%" height="120%"><feGaussianBlur stdDeviation="0.7"/></filter><clipPath id="c2"><rect width="29" height="29"/></clipPath></defs><g clip-path="url(#c2)"><rect width="29" height="29" fill="#e9edf2"/><g filter="url(#b2)">
<rect x="0" y="0" width="29" height="9" fill="#d9e2ec"/>
<path d="M6,29 L6.5,14 C7,11 9,10 11,10 C13,10 14,12 14,14 L15,29Z" fill="#231c1e"/>
<ellipse cx="11" cy="7" rx="2.6" ry="3" fill="#2b2428"/>
<path d="M12,16 C13,11 16,9 20,9.5 C24,10 26,13 25.5,18 C25,22 22,24 19,24 C15,24 12,21 12,16Z" fill="#d8b39c"/>
<path d="M13,13 C14,9 18,7.5 22,8.5 C25,9.5 27,12 26,15 L22,12 L16,13Z" fill="#b99583"/>
<rect x="15" y="13.5" width="8" height="2" fill="#3a2620"/>
<path d="M14,29 C15,24 18,22.5 22,22.5 C26,22.5 29,24 29,29Z" fill="#1e1a1c"/>
<rect x="24" y="15" width="5" height="9" fill="#2a2428"/>
</g></g></svg></div>
<div class="a nw td" style="left:586px;top:861px">Emily @</div>
<div class="a nw td" style="left:570px;top:892px">DevSamurai</div>
<div class="a" style="left:540px;top:990px"><svg width="30" height="30" viewBox="0 0 30 30"><circle cx="15" cy="15" r="15" fill="#1a8a55"/><text x="15" y="19.3" text-anchor="middle" font-family="Liberation Sans" font-weight="700" font-size="11.5" fill="#fff">LH</text></svg></div>
<div class="a nw td" style="left:586px;top:975px">Le Nguyen Gia</div>
<div class="a nw td" style="left:570px;top:1007px">Huy</div>

<!-- actions sticky column -->
<div class="a" style="left:1797px;top:653px;width:329px;height:410px;background:rgba(254,254,254,0.985);border-left:1px solid #efefef;box-shadow:-2px 0 3px rgba(0,0,0,0.03)"></div>
<div class="a" style="left:1797px;top:729px;width:329px;height:2px;background:#e0e0e0"></div>
<div class="a" style="left:1797px;top:831px;width:329px;height:2px;background:#e0e0e0"></div>
<div class="a" style="left:1797px;top:946px;width:329px;height:2px;background:#e0e0e0"></div>
<div class="a" style="left:1797px;top:1061px;width:329px;height:2px;background:#e0e0e0"></div>
<div class="a nw th" style="left:1822px;top:676px">Actions</div>
<div class="a" style="left:1968px;top:686px;width:25px;height:3px;background:#f4f4f4"></div>
<div class="a" style="left:1968px;top:693px;width:25px;height:3px;background:#f4f4f4"></div>
<div class="a" style="left:2007px;top:675px;width:4px;height:36px;background:#f6f6f6;border-radius:2px"></div>
<div class="a" style="left:1822px;top:757px;width:69px;height:50px;border-radius:4px;background:#fb9c24;box-shadow:0 1px 2px rgba(0,0,0,0.15)"></div>
<div class="a" style="left:1844px;top:770px"><svg width="24" height="24" viewBox="0 0 24 24"><path d="M19.8,8.5 A9,9 0 1 0 20.2,15.5" fill="none" stroke="#ffe6c4" stroke-width="2"/><path d="M15.5,8.8 L21.5,9.6 L21.2,3.5Z" fill="#ffe6c4"/></svg></div>
<div class="a" style="left:1898px;top:757px;width:68px;height:50px;border-radius:4px;background:#e03a10;box-shadow:0 1px 2px rgba(0,0,0,0.15)"></div>
<div class="a" style="left:1923px;top:772px"><svg width="18" height="20" viewBox="0 0 18 20" fill="#fff"><path d="M6,0.5 H12 L12.8,2.5 H17 C17.6,2.5 18,2.9 18,3.5 V4.5 H0 V3.5 C0,2.9 0.4,2.5 1,2.5 H5.2Z"/><path d="M1.5,6 H16.5 L15.6,18.2 C15.5,19.2 14.7,20 13.7,20 H4.3 C3.3,20 2.5,19.2 2.4,18.2Z"/></svg></div>
<div class="a" style="left:1822px;top:865px;width:69px;height:50px;border-radius:4px;background:#fb9c24;box-shadow:0 1px 2px rgba(0,0,0,0.15)"></div>
<div class="a" style="left:1844px;top:878px"><svg width="24" height="24" viewBox="0 0 24 24"><path d="M19.8,8.5 A9,9 0 1 0 20.2,15.5" fill="none" stroke="#ffe6c4" stroke-width="2"/><path d="M15.5,8.8 L21.5,9.6 L21.2,3.5Z" fill="#ffe6c4"/></svg></div>
<div class="a" style="left:1898px;top:865px;width:68px;height:50px;border-radius:4px;background:#e03a10;box-shadow:0 1px 2px rgba(0,0,0,0.15)"></div>
<div class="a" style="left:1923px;top:880px"><svg width="18" height="20" viewBox="0 0 18 20" fill="#fff"><path d="M6,0.5 H12 L12.8,2.5 H17 C17.6,2.5 18,2.9 18,3.5 V4.5 H0 V3.5 C0,2.9 0.4,2.5 1,2.5 H5.2Z"/><path d="M1.5,6 H16.5 L15.6,18.2 C15.5,19.2 14.7,20 13.7,20 H4.3 C3.3,20 2.5,19.2 2.4,18.2Z"/></svg></div>
<div class="a" style="left:1822px;top:980px;width:69px;height:50px;border-radius:4px;background:#fb9c24;box-shadow:0 1px 2px rgba(0,0,0,0.15)"></div>
<div class="a" style="left:1844px;top:993px"><svg width="24" height="24" viewBox="0 0 24 24"><path d="M19.8,8.5 A9,9 0 1 0 20.2,15.5" fill="none" stroke="#ffe6c4" stroke-width="2"/><path d="M15.5,8.8 L21.5,9.6 L21.2,3.5Z" fill="#ffe6c4"/></svg></div>
<div class="a" style="left:1898px;top:980px;width:68px;height:50px;border-radius:4px;background:#e03a10;box-shadow:0 1px 2px rgba(0,0,0,0.15)"></div>
<div class="a" style="left:1923px;top:995px"><svg width="18" height="20" viewBox="0 0 18 20" fill="#fff"><path d="M6,0.5 H12 L12.8,2.5 H17 C17.6,2.5 18,2.9 18,3.5 V4.5 H0 V3.5 C0,2.9 0.4,2.5 1,2.5 H5.2Z"/><path d="M1.5,6 H16.5 L15.6,18.2 C15.5,19.2 14.7,20 13.7,20 H4.3 C3.3,20 2.5,19.2 2.4,18.2Z"/></svg></div>

<svg class="a" style="left:1312px;top:778px" width="306" height="10" viewBox="0 0 306 10" fill="#1a1a1a"><circle cx="5.30" cy="5" r="2.2"/><circle cx="15.46" cy="5" r="2.2"/><circle cx="25.62" cy="5" r="2.2"/><circle cx="35.78" cy="5" r="2.2"/><circle cx="45.94" cy="5" r="2.2"/><circle cx="56.10" cy="5" r="2.2"/><circle cx="66.26" cy="5" r="2.2"/><circle cx="76.42" cy="5" r="2.2"/><circle cx="86.58" cy="5" r="2.2"/><circle cx="96.74" cy="5" r="2.2"/><circle cx="106.90" cy="5" r="2.2"/><circle cx="117.06" cy="5" r="2.2"/><circle cx="127.22" cy="5" r="2.2"/><circle cx="137.38" cy="5" r="2.2"/><circle cx="147.54" cy="5" r="2.2"/><circle cx="157.70" cy="5" r="2.2"/><circle cx="167.86" cy="5" r="2.2"/><circle cx="178.02" cy="5" r="2.2"/><circle cx="188.18" cy="5" r="2.2"/><circle cx="198.34" cy="5" r="2.2"/><circle cx="208.50" cy="5" r="2.2"/><circle cx="218.66" cy="5" r="2.2"/><circle cx="228.82" cy="5" r="2.2"/><circle cx="238.98" cy="5" r="2.2"/><circle cx="249.14" cy="5" r="2.2"/><circle cx="259.30" cy="5" r="2.2"/><circle cx="269.46" cy="5" r="2.2"/><circle cx="279.62" cy="5" r="2.2"/><circle cx="289.78" cy="5" r="2.2"/><circle cx="299.94" cy="5" r="2.2"/></svg>
<svg class="a" style="left:1312px;top:886px" width="306" height="10" viewBox="0 0 306 10" fill="#1a1a1a"><circle cx="5.30" cy="5" r="2.2"/><circle cx="15.46" cy="5" r="2.2"/><circle cx="25.62" cy="5" r="2.2"/><circle cx="35.78" cy="5" r="2.2"/><circle cx="45.94" cy="5" r="2.2"/><circle cx="56.10" cy="5" r="2.2"/><circle cx="66.26" cy="5" r="2.2"/><circle cx="76.42" cy="5" r="2.2"/><circle cx="86.58" cy="5" r="2.2"/><circle cx="96.74" cy="5" r="2.2"/><circle cx="106.90" cy="5" r="2.2"/><circle cx="117.06" cy="5" r="2.2"/><circle cx="127.22" cy="5" r="2.2"/><circle cx="137.38" cy="5" r="2.2"/><circle cx="147.54" cy="5" r="2.2"/><circle cx="157.70" cy="5" r="2.2"/><circle cx="167.86" cy="5" r="2.2"/><circle cx="178.02" cy="5" r="2.2"/><circle cx="188.18" cy="5" r="2.2"/><circle cx="198.34" cy="5" r="2.2"/><circle cx="208.50" cy="5" r="2.2"/><circle cx="218.66" cy="5" r="2.2"/><circle cx="228.82" cy="5" r="2.2"/><circle cx="238.98" cy="5" r="2.2"/><circle cx="249.14" cy="5" r="2.2"/><circle cx="259.30" cy="5" r="2.2"/><circle cx="269.46" cy="5" r="2.2"/><circle cx="279.62" cy="5" r="2.2"/><circle cx="289.78" cy="5" r="2.2"/><circle cx="299.94" cy="5" r="2.2"/></svg>
<svg class="a" style="left:1312px;top:1001px" width="306" height="10" viewBox="0 0 306 10" fill="#1a1a1a"><circle cx="5.30" cy="5" r="2.2"/><circle cx="15.46" cy="5" r="2.2"/><circle cx="25.62" cy="5" r="2.2"/><circle cx="35.78" cy="5" r="2.2"/><circle cx="45.94" cy="5" r="2.2"/><circle cx="56.10" cy="5" r="2.2"/><circle cx="66.26" cy="5" r="2.2"/><circle cx="76.42" cy="5" r="2.2"/><circle cx="86.58" cy="5" r="2.2"/><circle cx="96.74" cy="5" r="2.2"/><circle cx="106.90" cy="5" r="2.2"/><circle cx="117.06" cy="5" r="2.2"/><circle cx="127.22" cy="5" r="2.2"/><circle cx="137.38" cy="5" r="2.2"/><circle cx="147.54" cy="5" r="2.2"/><circle cx="157.70" cy="5" r="2.2"/><circle cx="167.86" cy="5" r="2.2"/><circle cx="178.02" cy="5" r="2.2"/><circle cx="188.18" cy="5" r="2.2"/><circle cx="198.34" cy="5" r="2.2"/><circle cx="208.50" cy="5" r="2.2"/><circle cx="218.66" cy="5" r="2.2"/><circle cx="228.82" cy="5" r="2.2"/><circle cx="238.98" cy="5" r="2.2"/><circle cx="249.14" cy="5" r="2.2"/><circle cx="259.30" cy="5" r="2.2"/><circle cx="269.46" cy="5" r="2.2"/><circle cx="279.62" cy="5" r="2.2"/><circle cx="289.78" cy="5" r="2.2"/><circle cx="299.94" cy="5" r="2.2"/></svg>
<div class="a" style="left:2012px;top:653px;width:114px;height:410px;overflow:hidden"><div class="a nw th" style="left:38px;top:25px;color:#f4f4f4">Updated</div><div class="a nw td" style="left:38px;top:115px;color:#f4f4f4">Nov 29, 2024</div><div class="a nw td" style="left:38px;top:223px;color:#f4f4f4">Nov 29, 2024</div><div class="a nw td" style="left:38px;top:338px;color:#f4f4f4">Nov 14, 2024</div></div>
<!-- scrollbar -->
<div class="a" style="left:516px;top:1063px;width:1610px;height:23px;background:#f6f6f6;border-bottom:1px solid #ececec"></div>
<div class="a" style="left:520px;top:1069px;width:1214px;height:13px;border-radius:7px;background:#c1c1c1"></div>
<div id="bottom" class="a"></div>
</body></html>
